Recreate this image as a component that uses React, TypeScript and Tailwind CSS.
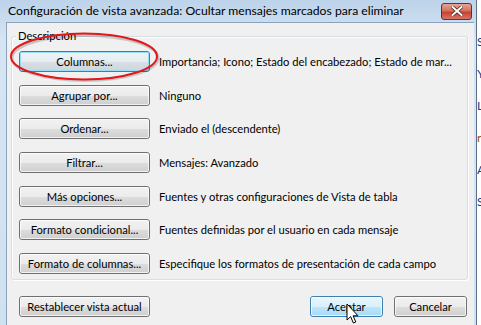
import React from 'react';

const rows = [
  { label: 'Columnas...', desc: 'Importancia; Icono; Estado del encabezado; Estado de mar...', focus: true },
  { label: 'Agrupar por...', desc: 'Ninguno' },
  { label: 'Ordenar...', desc: 'Enviado el (descendente)' },
  { label: 'Filtrar...', desc: 'Mensajes: Avanzado' },
  { label: 'Más opciones...', desc: 'Fuentes y otras configuraciones de Vista de tabla' },
  { label: 'Formato condicional...', desc: 'Fuentes definidas por el usuario en cada mensaje' },
  { label: 'Formato de columnas...', desc: 'Especifique los formatos de presentación de cada campo' },
];

function WinButton({ children, className = '', variant = 'normal' }: { children: React.ReactNode; className?: string; variant?: 'normal' | 'focus' | 'hot' }) {
  const skin =
    variant === 'hot'
      ? 'border-[#3c7fb1] bg-[linear-gradient(#eaf6fd_0%,#d9f0fc_50%,#bee6fd_51%,#a7d9f5_100%)]'
      : variant === 'focus'
      ? 'border-[#3c7fb1] bg-[linear-gradient(#edf3f7_0%,#e6ecf0_50%,#d9e0e5_51%,#cfd6db_100%)]'
      : 'border-[#707070] bg-[linear-gradient(#f2f2f2_0%,#ebebeb_50%,#dddddd_51%,#cfcfcf_100%)]';
  return (
    <div className={`h-[21px] rounded-[3px] border ${skin} ${className}`}>
      <div className={`flex h-full items-center justify-center whitespace-nowrap rounded-[2px] border ${variant === 'focus' ? 'border-[#98dcf5]' : 'border-white/70'} text-[11.2px] leading-none text-black`}>
        {children}
      </div>
    </div>
  );
}

export default function App() {
  return (
    <div className="relative flex h-[325px] w-[481px] overflow-hidden bg-white font-['Lato',sans-serif]">
      <div className="flex h-[340px] w-[477px] shrink-0 flex-col border-r border-[#5d7089] bg-[linear-gradient(#bdd3ea,#d6e5f4_40px,#cfe0f1)]">
        {/* title bar */}
        <div className="flex h-[22px] shrink-0 items-center justify-between pl-[8px] pr-[4px]">
          <span className="whitespace-nowrap text-[12.2px] leading-none text-black">
            Configuración de vista avanzada: Ocultar mensajes marcados para eliminar
          </span>
          <div className="flex h-[17px] w-[31px] items-center justify-center rounded-[3px] border border-[#6b2d2d] bg-[linear-gradient(#e8a493,#d5705d_45%,#c5432d_55%,#d4776a)]">
            <svg width="12" height="10" viewBox="0 0 12 10">
              <path d="M1.5 1 L10.5 9 M10.5 1 L1.5 9" stroke="#4a2020" strokeWidth="3.4" strokeLinecap="square" />
              <path d="M1.5 1 L10.5 9 M10.5 1 L1.5 9" stroke="#ffffff" strokeWidth="2" strokeLinecap="square" />
            </svg>
          </div>
        </div>

        {/* client area */}
        <div className="ml-[6px] mr-[2px] flex flex-1 flex-col border-l border-t border-[#8ba2bd] bg-[#f0f0f0] pl-[4px] pr-[6px]">
          {/* group box */}
          <div className="relative mt-[13px] h-[244px] rounded-[3px] border border-[#d5dfe5] shadow-[inset_1px_1px_0_#ffffff,1px_1px_0_#ffffff]">
            <span className="absolute left-[4px] top-[-8px] bg-[#f0f0f0] px-[2px] text-[11.2px] leading-[14px] text-black">
              Descripción
            </span>
            <div className="flex flex-col gap-[12.7px] pl-[7px] pt-[14px]">
              {rows.map((r) => (
                <div key={r.label} className="flex items-center">
                  <WinButton className="w-[131px] shrink-0" variant={r.focus ? 'focus' : 'normal'}>
                    {r.label}
                  </WinButton>
                  <span className="ml-[9px] whitespace-nowrap text-[11.2px] leading-none text-black">{r.desc}</span>
                </div>
              ))}
            </div>
          </div>

          {/* bottom buttons */}
          <div className="mt-[16px] flex items-center">
            <WinButton className="ml-[8px] w-[131px]">Restablecer vista actual</WinButton>
            <div className="flex-1" />
            <WinButton className="w-[73px]" variant="hot">Aceptar</WinButton>
            <WinButton className="ml-[11px] mr-[1px] w-[73px]">Cancelar</WinButton>
          </div>
        </div>
      </div>

      {/* background window fragments on the right */}
      <div className="flex flex-1 flex-col gap-[20px] pt-[36px] text-[12px] leading-none text-[#1a3a8c]">
        <span>S</span>
        <span>Y</span>
        <span>L</span>
        <span className="text-[#a05000]">r</span>
        <span>A</span>
        <span>S</span>
      </div>

      {/* red annotation ellipse */}
      <svg className="pointer-events-none absolute left-0 top-0" width="200" height="100" viewBox="0 0 200 100">
        <ellipse cx="85" cy="58" rx="73" ry="22.5" fill="none" stroke="#000" strokeOpacity="0.18" strokeWidth="3" />
        <ellipse cx="84" cy="56.5" rx="73" ry="23" fill="none" stroke="#e4161b" strokeWidth="2" />
      </svg>

      {/* mouse cursor */}
      <svg className="pointer-events-none absolute left-[346px] top-[303px]" width="14" height="22" viewBox="0 0 14 22">
        <path d="M1 1 L1 17 L4.6 13.6 L7.4 20 L9.8 19 L7.1 12.8 L12 12.8 Z" fill="#fff" stroke="#000" strokeWidth="1" strokeLinejoin="round" />
      </svg>
    </div>
  );
}
